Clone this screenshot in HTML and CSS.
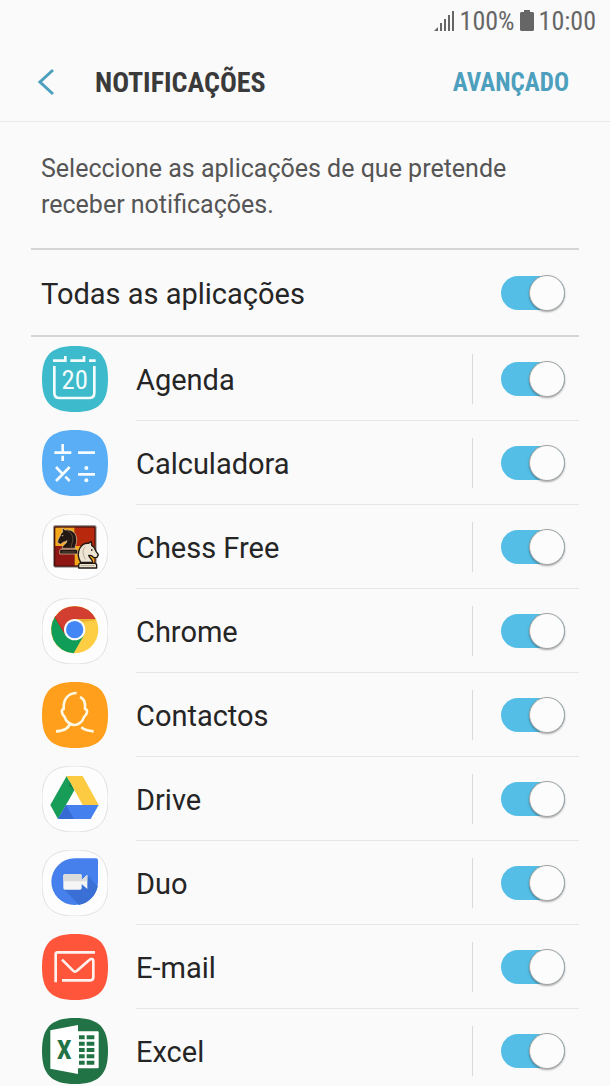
FILE: index.html
```html
<!DOCTYPE html>
<html lang="pt">
<head>
    <meta charset="UTF-8">
    <meta name="viewport" content="width=device-width, initial-scale=1.0">
    <title>Notificações</title>
    <link rel="stylesheet" href="styles.css">
</head>
<body>
    <svg class="defs" aria-hidden="true">
        <symbol id="squircle" viewBox="36 18 198 198">
            <path d="M135 18C206 18 234 46 234 117S206 216 135 216 36 188 36 117 64 18 135 18z"/>
        </symbol>
    </svg>

    <div class="status">
        <svg class="signal" viewBox="0 0 22 22" aria-hidden="true">
            <path d="M1 21l4-4v4zM7 13h2v8H7zM11 9h2v12h-2zM15 5h2v16h-2zM19 1h2v20h-2z"/>
        </svg>
        <span>100%</span>
        <svg class="battery" viewBox="0 0 14 22" aria-hidden="true">
            <path d="M4 0h6v2h3l1 1v17l-1 1H1l-1-1V3l1-1h3z"/>
        </svg>
        <span>10:00</span>
    </div>

    <header class="top">
        <button class="back" aria-label="Voltar">
            <svg viewBox="0 0 16 28"><path d="M15 2L2 14l13 12"/></svg>
        </button>
        <h1>NOTIFICAÇÕES</h1>
        <button class="advanced">AVANÇADO</button>
    </header>

    <main>
        <p class="intro">Seleccione as aplicações de que pretende receber notificações.</p>

        <div class="all">
            <label for="all">Todas as aplicações</label>
            <input class="switch" id="all" type="checkbox" checked>
        </div>

        <ul class="apps">
            <li>
                <svg class="icon" viewBox="36 18 198 198" aria-hidden="true">
                    <use href="#squircle" x="36" y="18" width="198" height="198" fill="#3dbacb"/>
                    <g fill="none" stroke="#f2fcfd" stroke-width="8">
                        <path d="M69 62h37V48M121 62h41V48M177 62h20"/>
                        <path d="M73 78v80q0 16 16 16h88q16 0 16-16V78"/>
                    </g>
                    <text class="day" x="134" y="147">20</text>
                </svg>
                <div class="row">
                    <label for="agenda">Agenda</label>
                    <span class="toggle"><input class="switch" id="agenda" type="checkbox" checked></span>
                </div>
            </li>
            <li>
                <svg class="icon" viewBox="36 18 198 198" aria-hidden="true">
                    <use href="#squircle" x="36" y="18" width="198" height="198" fill="#5aaef5"/>
                    <path fill="none" stroke="#f5fbff" stroke-width="8" d="M73 86h51M98 60v22M98 95v16M144 86h51M78 129l21 22M106 158l13 13M119 129l-41 42M144 151h51"/>
                    <circle cx="169" cy="132" r="6" fill="#f5fbff"/>
                    <circle cx="169" cy="169" r="6" fill="#f5fbff"/>
                </svg>
                <div class="row">
                    <label for="calculadora">Calculadora</label>
                    <span class="toggle"><input class="switch" id="calculadora" type="checkbox" checked></span>
                </div>
            </li>
            <li>
                <svg class="icon light" viewBox="36 18 198 198" aria-hidden="true">
                    <use href="#squircle" x="36" y="18" width="198" height="198"/>
                    <rect x="69" y="51" width="131" height="128" rx="7" fill="#9a9a9a"/>
                    <rect x="72" y="55" width="125" height="121" rx="4" fill="#4d130d"/>
                    <path fill="#f6a81c" d="M76 59h58v55H76z"/>
                    <path fill="#b8280d" d="M134 59h59v55h-59z"/>
                    <path fill="#8e1713" d="M76 114h58v58H76z"/>
                    <path fill="#f6a81c" d="M134 114h59v58h-59z"/>
                    <path fill="#231713" stroke="#e8cfa6" stroke-width="2" stroke-linejoin="round" d="M91 124h48l4 4v10H89v-10zM96 121c0-10 14-13 15-23-7 5-11 3-15 8l-5 3-8-5c-1-12 8-17 10-27l5-5-1-12 9 6c21-3 33 10 34 27 1 12-3 16-5 28z"/>
                    <path fill="none" stroke="#806451" stroke-width="2" d="M114 70c11 5 16 15 14 28-1 8-5 13-4 20M95 132h42"/>
                    <path fill="#e5ca9f" d="M94 84l7-4-2 5z"/>
                    <path fill="#eee5d4" stroke="#201914" stroke-width="4" stroke-linejoin="round" d="M149 166h47l4 4v10h-54v-10zM152 163c-8-14-9-31-2-43 6-10 15-15 25-14l9-6 1 12c8 4 11 11 13 18l7 10-4 8-9 1-7-6-9-1c3 10 13 12 12 21z"/>
                    <path fill="none" stroke="#b9ac98" stroke-width="3" d="M166 116c-10 8-8 24 0 38M152 173h42"/>
                    <path fill="#201914" d="M183 123l7 3-7 3z"/>
                </svg>
                <div class="row">
                    <label for="chess">Chess Free</label>
                    <span class="toggle"><input class="switch" id="chess" type="checkbox" checked></span>
                </div>
            </li>
            <li>
                <svg class="icon light" viewBox="36 18 198 198" aria-hidden="true">
                    <use href="#squircle" x="36" y="18" width="198" height="198"/>
                    <circle cx="134" cy="113" r="71" fill="#fdce43"/>
                    <path fill="#0f9d58" d="M76 73A71 71 0 0 0 131 184L162 129 134 113z"/>
                    <path fill="#d23f31" d="M74 76A71 71 0 0 1 197 81H134L106 129z"/>
                    <path fill="#be3225" d="M76 73l34 56-5-3-31-50z"/>
                    <path fill="#ebb02f" d="M134 81h62l1 4-42 5z"/>
                    <circle cx="134" cy="113" r="32" fill="#fafafa"/>
                    <circle cx="134" cy="113" r="26" fill="#4285f4"/>
                </svg>
                <div class="row">
                    <label for="chrome">Chrome</label>
                    <span class="toggle"><input class="switch" id="chrome" type="checkbox" checked></span>
                </div>
            </li>
            <li>
                <svg class="icon" viewBox="36 18 198 198" aria-hidden="true">
                    <use href="#squircle" x="36" y="18" width="198" height="198" fill="#ff9f1c"/>
                    <path fill="none" stroke="#fff8e3" stroke-width="8" stroke-linejoin="round" d="M140 51c-25 0-41 18-39 48-8 1-7 15 3 24 3 13 17 24 29 24s25-10 29-24c11-8 12-23 3-24 2-16-2-30-15-36M119 140c1 14-15 25-41 26M154 154c9 8 20 11 37 12"/>
                </svg>
                <div class="row">
                    <label for="contactos">Contactos</label>
                    <span class="toggle"><input class="switch" id="contactos" type="checkbox" checked></span>
                </div>
            </li>
            <li>
                <svg class="icon light" viewBox="36 18 198 198" aria-hidden="true">
                    <use href="#squircle" x="36" y="18" width="198" height="198"/>
                    <path fill="#179d58" d="M110 48L61 135l23 42 49-86z"/>
                    <path fill="#fdcb41" d="M110 48h48l48 87h-48z"/>
                    <path fill="#4580ef" d="M108 135h98l-24 42H84z"/>
                    <path fill="#356bd3" d="M108 135l24 42H84z"/>
                    <path fill="#11854a" d="M133 91l-17-13 2-15z"/>
                </svg>
                <div class="row">
                    <label for="drive">Drive</label>
                    <span class="toggle"><input class="switch" id="drive" type="checkbox" checked></span>
                </div>
            </li>
            <li>
                <svg class="icon light" viewBox="36 18 198 198" aria-hidden="true">
                    <use href="#squircle" x="36" y="18" width="198" height="198"/>
                    <path fill="#4580ec" d="M134 43h64q6 0 6 6v65a70 70 0 1 1-70-71z"/>
                    <path fill="#3a6fd5" d="M101 135l46 48c29-5 50-27 56-56l-31-33-18 41z"/>
                    <path fill="#f5f5f5" d="M105 90h45q5 0 5 5v13l17-16v43l-17-15v12q0 5-5 5h-45q-5 0-5-5V95q0-5 5-5z"/>
                    <path fill="#dcdcdc" d="M100 95q0-5 5-5h45q5 0 5 5v13l17-16v20h-72z"/>
                </svg>
                <div class="row">
                    <label for="duo">Duo</label>
                    <span class="toggle"><input class="switch" id="duo" type="checkbox" checked></span>
                </div>
            </li>
            <li>
                <svg class="icon" viewBox="36 18 198 198" aria-hidden="true">
                    <use href="#squircle" x="36" y="18" width="198" height="198" fill="#ff553b"/>
                    <path fill="none" stroke="#fff1ee" stroke-width="8" d="M77 163V79q0-6 6-6h112M96 95l33 33q6 6 12 0l36-31c6-6 13-6 13 3v48q0 9-9 9H96"/>
                </svg>
                <div class="row">
                    <label for="email">E-mail</label>
                    <span class="toggle"><input class="switch" id="email" type="checkbox" checked></span>
                </div>
            </li>
            <li>
                <svg class="icon" viewBox="36 36 198 198" aria-hidden="true">
                    <use href="#squircle" x="36" y="36" width="198" height="198" fill="#217346"/>
                    <rect x="140" y="76" width="66" height="111" rx="3" fill="#fff"/>
                    <path fill="none" stroke="#217346" stroke-width="12" d="M147 94h17M170 94h23M147 113h17M170 113h23M147 132h17M170 132h23M147 151h17M170 151h23M147 170h17M170 170h23"/>
                    <path fill="#fff" d="M61 73l83-16v147l-83-16z"/>
                    <text class="sheet" x="103" y="159">X</text>
                </svg>
                <div class="row">
                    <label for="excel">Excel</label>
                    <span class="toggle"><input class="switch" id="excel" type="checkbox" checked></span>
                </div>
            </li>
        </ul>
    </main>
</body>
</html>
```
FILE: styles.css
```css
* {
    box-sizing: border-box;
}
body {
    height: 100vh;
    margin: 0;
    overflow: hidden;
    background-color: #fafafa;
    color: #252525;
    font-family: Roboto, "Liberation Sans", sans-serif;
}
button {
    border: 0;
    padding: 0;
    background: none;
    color: #4d9fbe;
    cursor: pointer;
}
.defs {
    position: absolute;
    width: 0;
    height: 0;
}
.status {
    display: flex;
    align-items: center;
    justify-content: flex-end;
    gap: 5px;
    height: 42px;
    padding-right: 14px;
    color: #666;
    font-family: "Roboto Condensed", Roboto, sans-serif;
    font-size: 26px;
}
.status svg {
    fill: #666;
}
.signal {
    width: 22px;
    height: 22px;
}
.battery {
    width: 14px;
    height: 22px;
}
.top {
    display: flex;
    align-items: center;
    height: 80px;
    padding: 0 41px 0 38px;
    border-bottom: 1px solid #e9e9e9;
    font-family: "Roboto Condensed", Roboto, sans-serif;
}
.back svg {
    display: block;
    width: 16px;
    height: 28px;
    fill: none;
    stroke: #4d9fbe;
    stroke-width: 3px;
}
h1 {
    flex: 1;
    margin: 0 0 0 41px;
    padding-top: 2px;
    color: #3a3a3a;
    font-size: 28px;
    font-weight: bold;
}
.advanced {
    padding-top: 2px;
    font-family: inherit;
    font-size: 25px;
    font-weight: bold;
}
main {
    padding: 0 31px;
}
.intro {
    margin: 0;
    padding: 29px 10px 25px;
    color: #555;
    font-size: 25px;
    line-height: 36px;
}
.all {
    display: flex;
    align-items: center;
    justify-content: space-between;
    height: 89px;
    padding: 0 14px 0 10px;
    border-top: 2px solid #d5d5d5;
    border-bottom: 2px solid #d5d5d5;
    font-size: 29px;
}
.all label,
.row label {
    padding-top: 2px;
}
.apps {
    margin: 0;
    padding: 0;
    list-style: none;
    font-size: 29px;
}
.apps li {
    display: flex;
    align-items: center;
    gap: 28px;
    height: 84px;
    padding-left: 11px;
}
.icon {
    flex: none;
    width: 66px;
    height: 66px;
}
.light use {
    fill: #fdfdfd;
    stroke: #e2e2e2;
    stroke-width: 3px;
}
.row {
    display: flex;
    flex: 1;
    align-items: center;
    justify-content: space-between;
    height: 84px;
    padding-right: 14px;
    border-bottom: 1px solid #e6e6e6;
}
.toggle {
    display: flex;
    align-items: center;
    height: 50px;
    padding-left: 28px;
    border-left: 1px solid #d9d9d9;
}
.switch {
    display: flex;
    align-items: center;
    width: 64px;
    height: 34px;
    margin: 0;
    border-radius: 17px;
    background-color: #bbb;
    appearance: none;
    cursor: pointer;
}
.switch::before {
    content: "";
    box-sizing: border-box;
    width: 36px;
    height: 36px;
    flex: none;
    border: 1px solid #a5a5a5;
    border-radius: 50%;
    background-color: #fcfcfc;
    box-shadow: 0 1px 2px rgba(0, 0, 0, 0.35);
}
.switch:checked {
    justify-content: flex-end;
    background-color: #54bee6;
}
.day {
    fill: #f2fcfd;
    font-family: "Roboto Condensed", Roboto, sans-serif;
    font-size: 80px;
    text-anchor: middle;
}
.sheet {
    fill: #217346;
    font-family: "Roboto Condensed", Roboto, sans-serif;
    font-size: 80px;
    font-weight: bold;
    text-anchor: middle;
}
```
